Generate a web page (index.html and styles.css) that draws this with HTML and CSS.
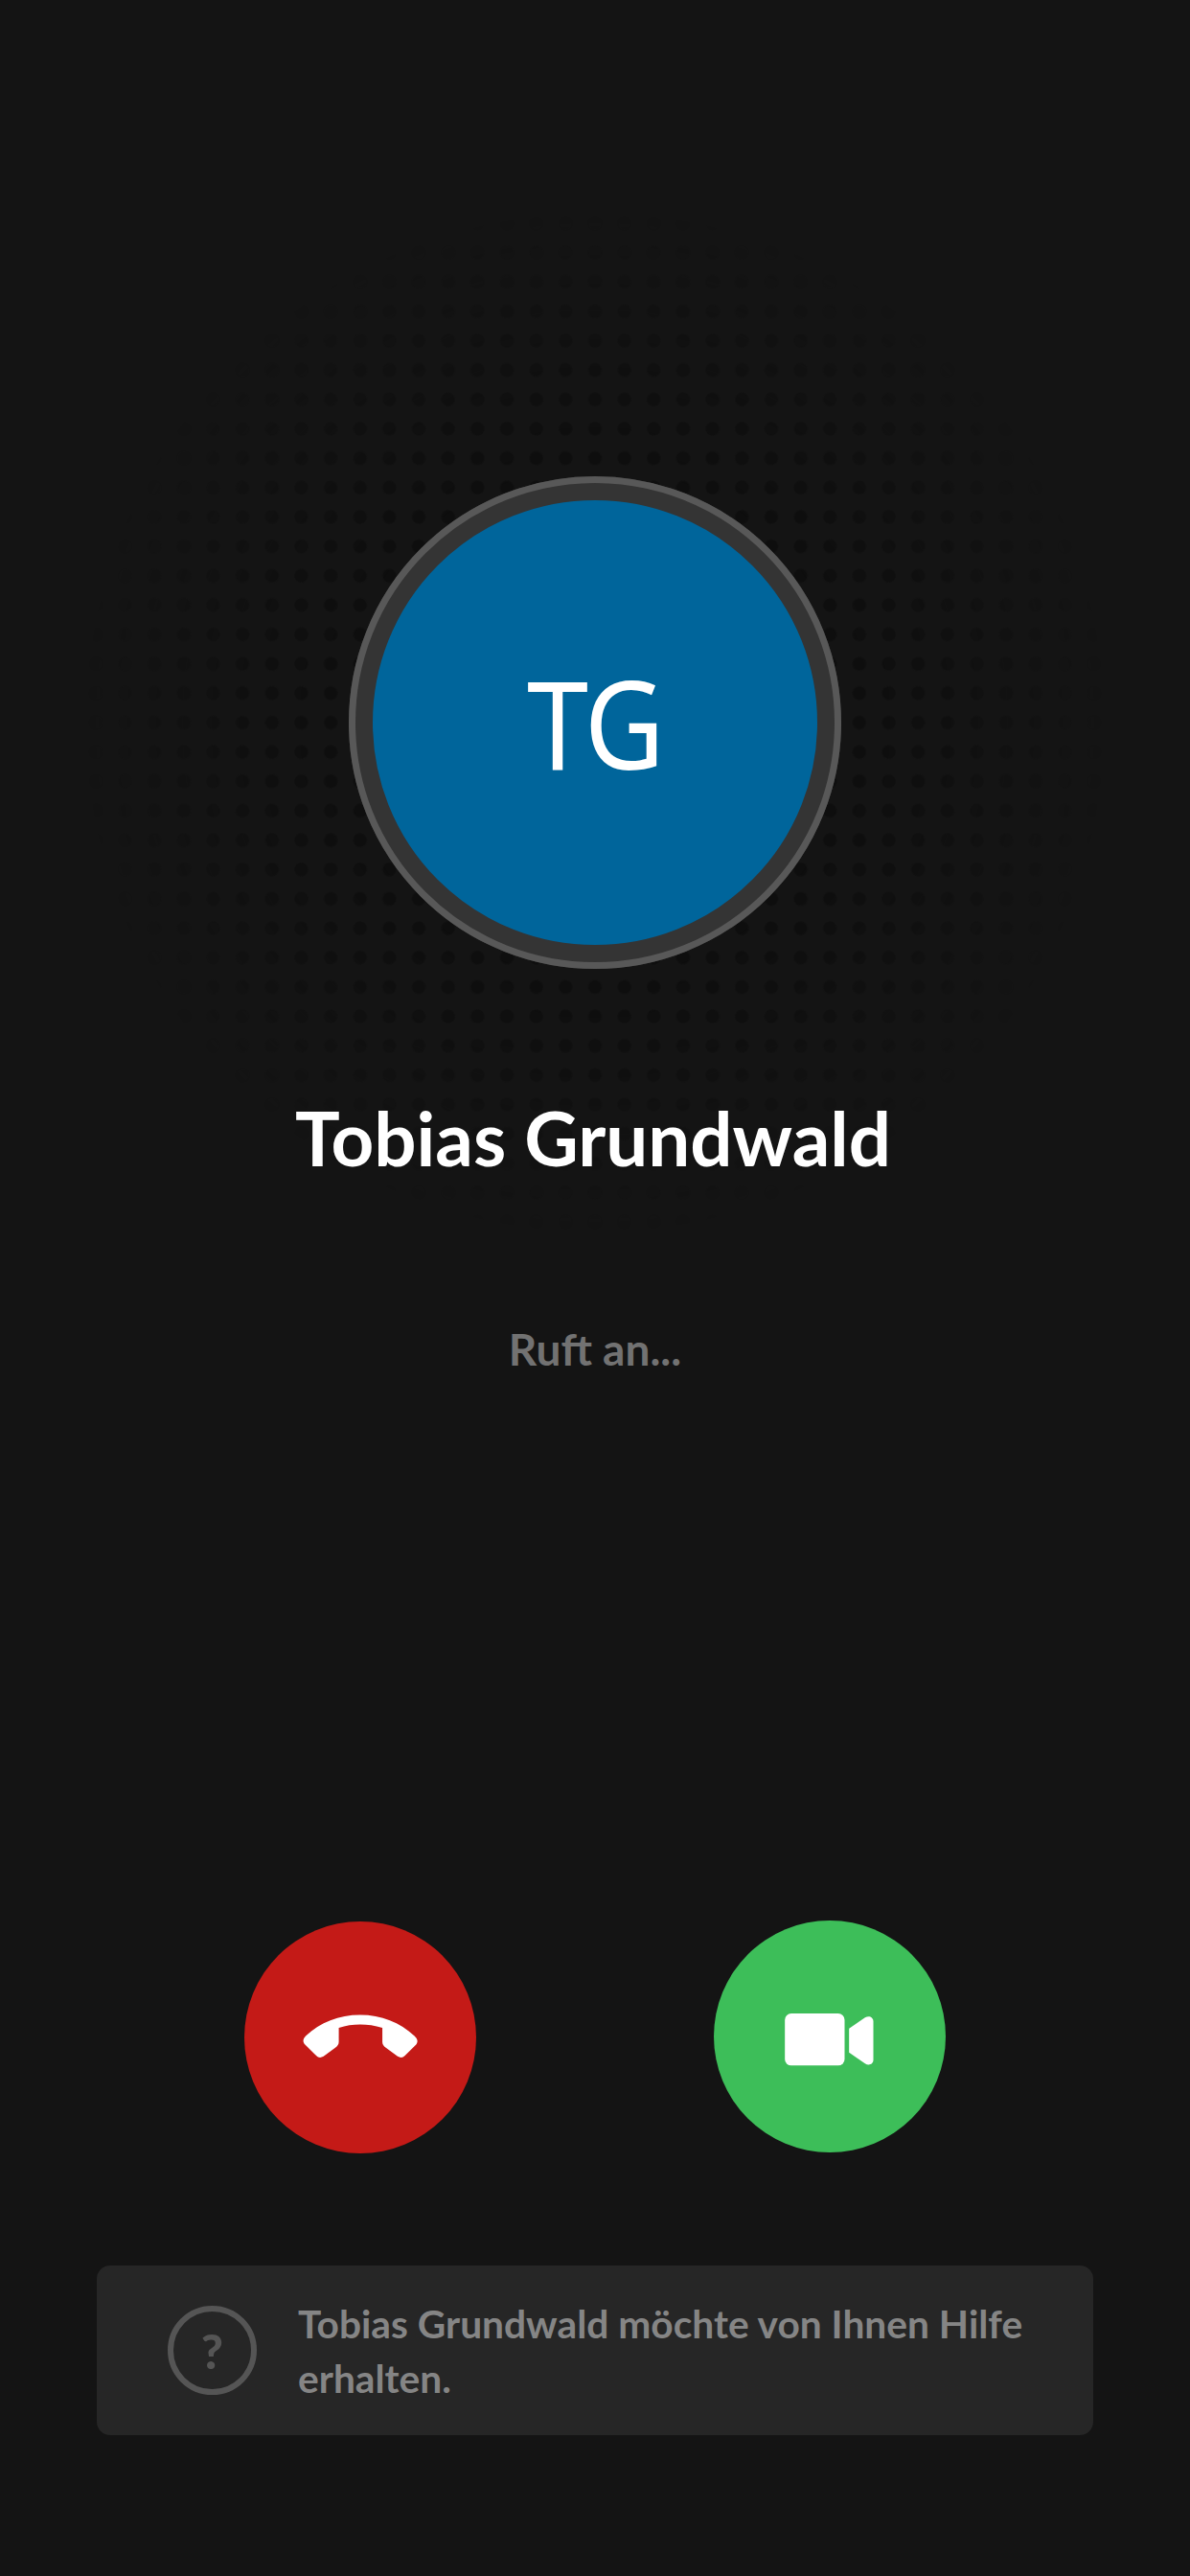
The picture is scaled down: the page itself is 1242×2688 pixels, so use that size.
FILE: index.html
```html
<!DOCTYPE html>
<html lang="de">
<head>
<meta charset="utf-8">
<title>Ruft an</title>
<link rel="stylesheet" href="styles.css">
</head>
<body>
<main class="page">
  <div class="avatar-wrap">
    <div class="dots"></div>
    <div class="avatar"><span class="initials">TG</span></div>
  </div>
  <h1 class="name">Tobias Grundwald</h1>
  <p class="status">Ruft an...</p>
  <div class="actions">
    <button class="call decline" aria-label="Ablehnen">
      <svg viewBox="45 76 725 729"><path d="M236 436C282 394 340 370 407 370C474 370 532 394 578 436C588 445 590 455 583 463L548 498C541 505 533 505 525 500L488 473C481 468 477 463 477 455V410C430 396 384 396 340 410V455C340 463 336 468 329 473L292 500C284 505 276 505 269 498L234 463C226 455 227 445 236 436Z"/></svg>
    </button>
    <button class="call accept" aria-label="Annehmen">
      <svg viewBox="43 72 725 726"><rect x="265" y="363" width="187" height="163" rx="20"/><path d="M466 410L516 376C528 368 542 374 542 388V508C542 522 528 528 516 520L466 485Z"/></svg>
    </button>
  </div>
  <aside class="notice">
    <div class="help">?</div>
    <p class="notice-text">Tobias Grundwald möchte von Ihnen Hilfe erhalten.</p>
  </aside>
</main>
</body>
</html>
```
FILE: styles.css
```css
* { box-sizing: border-box; margin: 0; padding: 0; }
html, body { width: 1242px; height: 2688px; background: #141414; overflow: hidden; }
body { font-family: "Lato", "Noto Sans", sans-serif; }
.page {
  width: 1242px;
  height: 2688px;
  background: #141414;
  isolation: isolate;
  display: flex;
  flex-direction: column;
  align-items: center;
  padding-top: 497px;
}
.avatar-wrap { position: relative; width: 514px; height: 514px; margin-left: -1px; }
.dots {
  position: absolute;
  left: 50%;
  top: 50%;
  width: 1064px;
  height: 1064px;
  transform: translate(-50%, -50%);
  z-index: -1;
  background-image: radial-gradient(circle, #0d0d0d 6.5px, rgba(13,13,13,0) 7.5px);
  background-size: 30.67px 30.67px;
  background-position: center;
  -webkit-mask-image: radial-gradient(circle closest-side, #000 35%, rgba(0,0,0,.55) 70%, transparent 100%);
  mask-image: radial-gradient(circle closest-side, #000 35%, rgba(0,0,0,.55) 70%, transparent 100%);
}
.avatar {
  width: 514px;
  height: 514px;
  border-radius: 50%;
  background: #00659b;
  border: 25px solid #343434;
  outline: 7px solid #585858;
  outline-offset: -7px;
  display: flex;
  align-items: center;
  justify-content: center;
}
.initials {
  font-family: "Noto Sans", sans-serif;
  font-size: 128px;
  font-weight: 400;
  line-height: 1;
  color: #fff;
  transform: scaleX(.9);
  letter-spacing: -2px;
}
.name {
  margin-top: 129px;
  margin-left: -4px;
  font-size: 78px;
  line-height: 94px;
  font-weight: 700;
  color: #fff;
  white-space: nowrap;
}
.status {
  margin-top: 146px;
  font-size: 46px;
  line-height: 56px;
  font-weight: 700;
  color: #727272;
}
.actions {
  margin-top: 568px;
  width: 732px;
  margin-left: -1px;
  display: flex;
  justify-content: space-between;
}
.call {
  width: 242px;
  height: 242px;
  border: 0;
  border-radius: 50%;
  display: block;
}
.call svg { display: block; width: 100%; height: 100%; fill: #fff; }
.decline { background: #c41a17; margin-top: 1px; }
.accept { background: #3dbe59; }
.notice {
  margin-top: 117px;
  width: 1040px;
  height: 177px;
  background: #262626;
  border-radius: 14px;
  display: flex;
  align-items: center;
  padding: 0 60px 0 74px;
  gap: 43px;
}
.help {
  flex: none;
  width: 93px;
  height: 93px;
  border: 6px solid #555;
  border-radius: 50%;
  display: flex;
  align-items: center;
  justify-content: center;
  font-size: 50px;
  font-weight: 900;
  line-height: 1;
  color: #555;
}
.notice-text {
  font-size: 40.7px;
  line-height: 57px;
  font-weight: 700;
  color: #858585;
}
```
